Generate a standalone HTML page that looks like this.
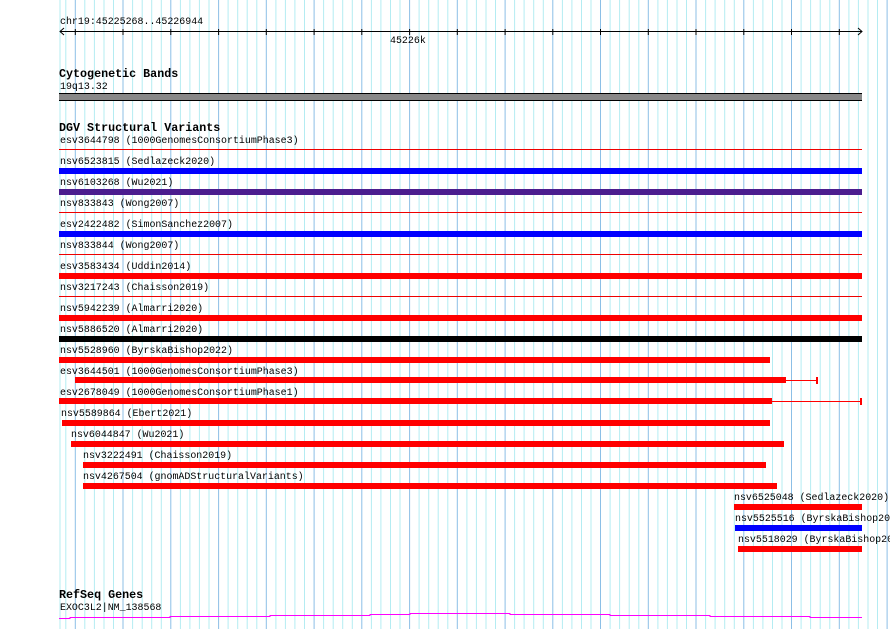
<!DOCTYPE html>
<html><head><meta charset="utf-8"><style>
body{margin:0;width:890px;height:629px;background:#fff;position:relative;overflow:hidden;font-family:"Liberation Mono",monospace}
.t{position:absolute;font-size:9.95px;line-height:12px;color:#000;white-space:nowrap;margin-top:1px}
.h{position:absolute;font-size:11.7px;font-weight:bold;line-height:13px;white-space:nowrap;margin-top:1px}
.b{position:absolute;height:6px}
.l{position:absolute;height:1px}
svg{position:absolute;left:0;top:0}
</style></head><body>
<svg width="890" height="629" id="g"></svg>
<script>
var s='',x;
for(var k=-1;k<86;k++){x=75.3+9.55*k;if(x<59||x>890)continue;var maj=(k%5==0);
s+='<line x1="'+x.toFixed(1)+'" y1="0" x2="'+x.toFixed(1)+'" y2="629" stroke="'+(maj?'#8cbfe6':'#b4ecf2')+'" stroke-width="1"/>';}
s+='<line x1="60" y1="0" x2="60" y2="629" stroke="#b4ecf2"/>';
s+='<line x1="60" y1="31.5" x2="862" y2="31.5" stroke="#000"/>';
s+='<polyline points="64,28 60,31.5 64,35" fill="none" stroke="#000"/><polyline points="858,28 862,31.5 858,35" fill="none" stroke="#000"/>';
for(var k=0;k<17;k++){x=75.3+47.75*k;if(x>860)break;s+='<line x1="'+x.toFixed(1)+'" y1="29" x2="'+x.toFixed(1)+'" y2="35" stroke="#000"/>';}
s+='<polyline points="59,618.5 70,618.5 70,617.5 170,617.5 170,616.5 270,616.5 270,615.5 370,615.5 370,614.5 410,614.5 410,613.5 510,613.5 510,614.5 610,614.5 610,615.5 710,615.5 710,616.5 810,616.5 810,617.5 862,617.5" fill="none" stroke="#f0f" stroke-width="1"/>';
document.getElementById('g').innerHTML=s;
</script>
<div class="t" style="left:60px;top:15px">chr19:45225268..45226944</div>
<div class="t" style="left:390px;top:34px">45226k</div>
<div class="h" style="left:59px;top:67px">Cytogenetic Bands</div>
<div class="t" style="left:60px;top:80px">19q13.32</div>
<div style="position:absolute;left:59px;top:93px;width:803px;height:6px;background:#888;border-top:1px solid #000;border-bottom:1px solid #000"></div>
<div class="h" style="left:59px;top:121px">DGV Structural Variants</div>

<div class="t" style="left:60px;top:134px">esv3644798 (1000GenomesConsortiumPhase3)</div><div class="l" style="left:59px;top:149px;width:803px;background:#e00"></div>
<div class="t" style="left:60px;top:155px">nsv6523815 (Sedlazeck2020)</div><div class="b" style="left:59px;top:168px;width:803px;background:#00f"></div>
<div class="t" style="left:60px;top:176px">nsv6103268 (Wu2021)</div><div class="b" style="left:59px;top:189px;width:803px;background:#4b1d8f"></div>
<div class="t" style="left:60px;top:197px">nsv833843 (Wong2007)</div><div class="l" style="left:59px;top:212px;width:803px;background:#e00"></div>
<div class="t" style="left:60px;top:218px">esv2422482 (SimonSanchez2007)</div><div class="b" style="left:59px;top:231px;width:803px;background:#00f"></div>
<div class="t" style="left:60px;top:239px">nsv833844 (Wong2007)</div><div class="l" style="left:59px;top:254px;width:803px;background:#e00"></div>
<div class="t" style="left:60px;top:260px">esv3583434 (Uddin2014)</div><div class="b" style="left:59px;top:273px;width:803px;background:#f00"></div>
<div class="t" style="left:60px;top:281px">nsv3217243 (Chaisson2019)</div><div class="l" style="left:59px;top:296px;width:803px;background:#e00"></div>
<div class="t" style="left:60px;top:302px">nsv5942239 (Almarri2020)</div><div class="b" style="left:59px;top:315px;width:803px;background:#f00"></div>
<div class="t" style="left:60px;top:323px">nsv5886520 (Almarri2020)</div><div class="b" style="left:59px;top:336px;width:803px;background:#000"></div>
<div class="t" style="left:60px;top:344px">nsv5528960 (ByrskaBishop2022)</div><div class="b" style="left:59px;top:357px;width:711px;background:#f00"></div>
<div class="t" style="left:60px;top:365px">esv3644501 (1000GenomesConsortiumPhase3)</div><div class="b" style="left:75px;top:377px;width:711px;background:#f00"></div><div class="l" style="left:786px;top:380px;width:31px;background:#f00"></div><div style="position:absolute;left:816px;top:377px;width:2px;height:7px;background:#f00"></div>
<div class="t" style="left:60px;top:386px">esv2678049 (1000GenomesConsortiumPhase1)</div><div class="b" style="left:59px;top:398px;width:713px;background:#f00"></div><div class="l" style="left:772px;top:401px;width:90px;background:#f00"></div><div style="position:absolute;left:860px;top:398px;width:2px;height:7px;background:#f00"></div>
<div class="t" style="left:61px;top:407px">nsv5589864 (Ebert2021)</div><div class="b" style="left:62px;top:420px;width:708px;background:#f00"></div>
<div class="t" style="left:71px;top:428px">nsv6044847 (Wu2021)</div><div class="b" style="left:71px;top:441px;width:713px;background:#f00"></div>
<div class="t" style="left:83px;top:449px">nsv3222491 (Chaisson2019)</div><div class="b" style="left:83px;top:462px;width:683px;background:#f00"></div>
<div class="t" style="left:83px;top:470px">nsv4267504 (gnomADStructuralVariants)</div><div class="b" style="left:83px;top:483px;width:694px;background:#f00"></div>
<div class="t" style="left:734px;top:491px">nsv6525048 (Sedlazeck2020)</div><div class="b" style="left:734px;top:504px;width:128px;background:#f00"></div>
<div class="t" style="left:735px;top:512px">nsv5525516 (ByrskaBishop2022)</div><div class="b" style="left:735px;top:525px;width:127px;background:#00f"></div>
<div class="t" style="left:738px;top:533px">nsv5518029 (ByrskaBishop2022)</div><div class="b" style="left:738px;top:546px;width:124px;background:#f00"></div>

<div class="h" style="left:59px;top:588px">RefSeq Genes</div>
<div class="t" style="left:60px;top:601px">EXOC3L2|NM_138568</div>
</body></html>
